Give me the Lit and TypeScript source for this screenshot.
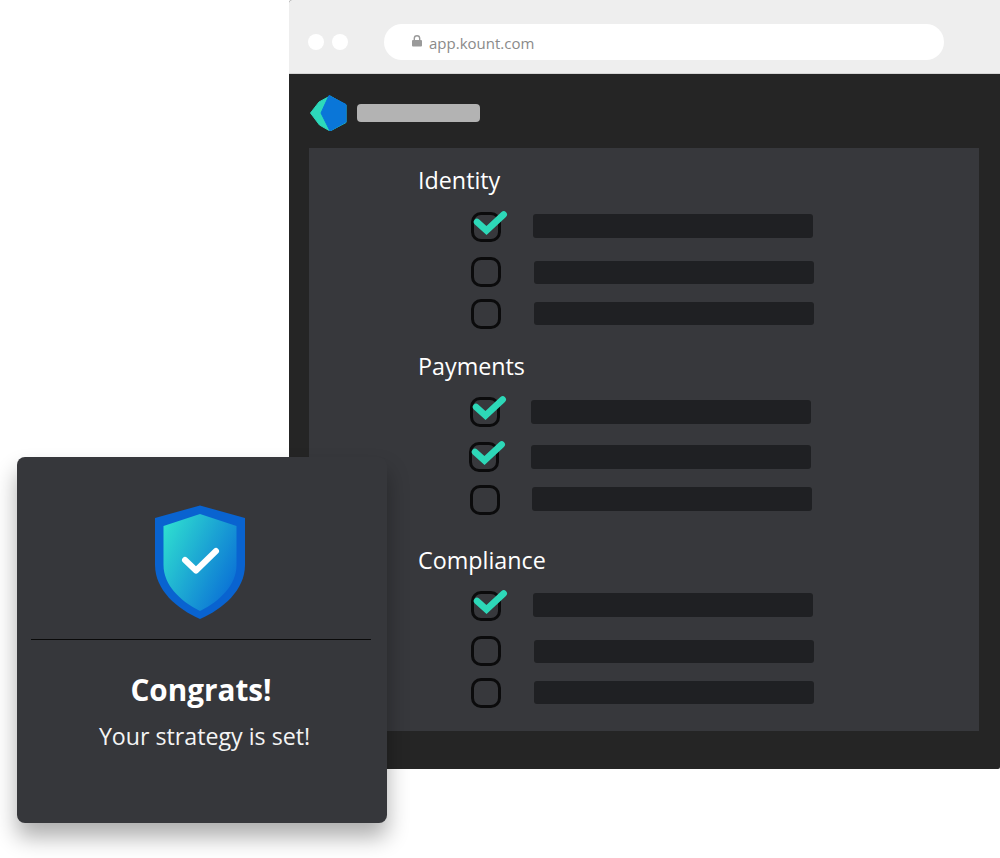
import { LitElement, html, css, svg } from "lit";
import { customElement } from "lit/decorators.js";

interface Row { checked: boolean; top: number; boxX: number; barX: number; barTop: number; barH: number; }
interface Group { title: string; top: number; rows: Row[]; }

const checklistRows = (firstTop: number): Row[] => [
  { checked: true, top: firstTop, boxX: 53, barX: 31.5, barTop: 2, barH: 24 },
  { checked: false, top: 15, boxX: 53, barX: 33, barTop: 4, barH: 23 },
  { checked: false, top: 12, boxX: 53, barX: 33, barTop: 3, barH: 23 },
];

const groups: Group[] = [
  { title: "Identity", top: 17, rows: checklistRows(17) },
  {
    title: "Payments",
    top: 22,
    rows: [
      { checked: true, top: 16, boxX: 52, barX: 31, barTop: 3, barH: 24 },
      { checked: true, top: 15, boxX: 51, barX: 32, barTop: 3, barH: 24 },
      { checked: false, top: 13, boxX: 52, barX: 32, barTop: 2, barH: 24 },
    ],
  },
  { title: "Compliance", top: 30, rows: checklistRows(16) },
];

const tick = svg`<svg class="tick" width="38" height="34" viewBox="0 0 38 34" aria-hidden="true">
  <path d="M6 17 L15.5 25.5 L32.7 9.5" fill="none" stroke="#2dd8b8" stroke-width="6.5" stroke-linecap="round" stroke-linejoin="miter"/>
</svg>`;

@customElement("app-root")
export class AppRoot extends LitElement {
  static styles = css`
    :host {
      display: block;
      position: relative;
      width: 1000px;
      height: 858px;
      background: #fff;
      overflow: hidden;
      font-family: "Open Sans", "Noto Sans", sans-serif;
    }
    .browser {
      margin-left: 289px;
      width: 711px;
      height: 769px;
      background: #252525;
      border-radius: 3px 0 2px 0;
      display: flex;
      flex-direction: column;
      overflow: hidden;
    }
    .chrome {
      height: 74px;
      flex: none;
      box-sizing: border-box;
      background: #eeeeee;
      border-bottom: 1px solid #d6d6d6;
      display: flex;
      align-items: center;
      padding: 10px 56px 0 19px;
    }
    .dot {
      width: 16px;
      height: 16px;
      border-radius: 50%;
      background: #fff;
      margin-right: 8px;
      flex: none;
    }
    .url {
      margin-left: 28px;
      flex: 1;
      height: 36px;
      border-radius: 18px;
      background: #fff;
      display: flex;
      align-items: center;
      padding-left: 28px;
      gap: 7px;
      color: #8a8a8a;
      font-size: 15px;
    }
    .url span {
      margin-top: 3px;
    }
    .url svg {
      margin-top: -1px;
    }
    .brand {
      height: 74px;
      flex: none;
      display: flex;
      align-items: center;
      padding-left: 21px;
      gap: 10px;
    }
    .logo {
      margin-top: 3px;
    }
    .logo-bar {
      width: 123px;
      height: 18px;
      border-radius: 4px;
      background: #b3b3b3;
      margin-top: 4px;
    }
    .panel {
      margin-left: 20px;
      width: 670px;
      height: 583px;
      background: #37383c;
      box-sizing: border-box;
      padding-left: 109px;
    }
    .title {
      color: #fff;
      font-size: 23.3px;
      line-height: 30px;
    }
    .row {
      position: relative;
      display: flex;
      align-items: flex-start;
      height: 30px;
    }
    .box {
      box-sizing: border-box;
      width: 30px;
      height: 30px;
      border: 3px solid #0b0b0c;
      border-radius: 10px;
      flex: none;
    }
    .tick {
      position: absolute;
      top: -7px;
      left: 0;
    }
    .bar {
      height: 24px;
      flex: none;
      width: 280px;
      background: #1f2023;
      border-radius: 3px;
    }
    .popup {
      position: absolute;
      left: 17px;
      top: 457px;
      width: 370px;
      height: 366px;
      box-sizing: border-box;
      background: #36373b;
      border-radius: 8px;
      box-shadow: 0 14px 22px rgba(0, 0, 0, 0.32);
      display: flex;
      flex-direction: column;
      align-items: center;
      color: #fff;
      padding: 48px 16px 0 14px;
    }
    .shield {
      margin-right: 2px;
    }
    .divider {
      align-self: stretch;
      height: 1px;
      background: #0a0a0a;
      margin-top: 20px;
    }
    .congrats {
      font-weight: 700;
      font-size: 29.7px;
      line-height: 36px;
      margin-top: 32px;
    }
    .msg {
      font-size: 23.2px;
      line-height: 30px;
      margin-top: 13px;
      margin-left: 7px;
      color: #f4f4f4;
    }
  `;

  private renderRow(r: Row) {
    return html`<div class="row" style="margin-top:${r.top}px;margin-left:${r.boxX}px">
      <div class="box"></div>
      ${r.checked ? html`<div class="tick-wrap">${tick}</div>` : null}
      <div class="bar" style="margin-left:${r.barX}px;margin-top:${r.barTop}px;height:${r.barH}px"></div>
    </div>`;
  }

  render() {
    return html`
      <div class="browser">
        <div class="chrome">
          <span class="dot"></span><span class="dot"></span>
          <div class="url">
            <svg width="10" height="12" viewBox="0 0 10 12" aria-hidden="true">
              <path d="M2.3 5V3.4a2.7 2.7 0 0 1 5.4 0V5" fill="none" stroke="#9a9a9a" stroke-width="1.4"/>
              <rect x="0" y="5" width="10" height="6.5" rx="1" fill="#9a9a9a"/>
            </svg>
            <span>app.kount.com</span>
          </div>
        </div>
        <div class="brand">
          <svg class="logo" width="37" height="36" viewBox="0 0 37 36" aria-hidden="true">
            <path d="M0.5 18 L9 7 L20 1 L36 10 L36 27.5 L20 36 L9.5 30 Z" fill="#2dd9bb" stroke="#2dd9bb" stroke-linejoin="round"/>
            <path d="M19 0.5 L36 9.5 L36 27 L20 36 L11 18 Z" fill="#0a76d8" stroke="#0a76d8" stroke-linejoin="round"/>
          </svg>
          <div class="logo-bar"></div>
        </div>
        <div class="panel">
          ${groups.map(
            (g) => html`<div class="title" style="padding-top:${g.top}px">${g.title}</div>
              ${g.rows.map((r) => this.renderRow(r))}`
          )}
        </div>
      </div>
      <div class="popup">
        <svg class="shield" width="90" height="114" viewBox="0 0 90 114" aria-hidden="true">
          <defs>
            <linearGradient id="sg" x1="0" y1="0.1" x2="1" y2="0.75">
              <stop offset="0" stop-color="#2fe0d0"/>
              <stop offset="1" stop-color="#0a6fd6"/>
            </linearGradient>
          </defs>
          <path d="M45 0.5 L90 13 V60 C90 85 68 104 45 114 C22 104 0 85 0 60 V13 Z" fill="#0963d0"/>
          <path d="M45 9 L81.5 21 V60 C81.5 80 65 96 45 106 C25 96 8.5 80 8.5 60 V21 Z" fill="url(#sg)"/>
          <path d="M30 55 L41 65.5 L61 46" fill="none" stroke="#fff" stroke-width="6" stroke-linecap="round" stroke-linejoin="round"/>
        </svg>
        <div class="divider"></div>
        <div class="congrats">Congrats!</div>
        <div class="msg">Your strategy is set!</div>
      </div>
    `;
  }
}
